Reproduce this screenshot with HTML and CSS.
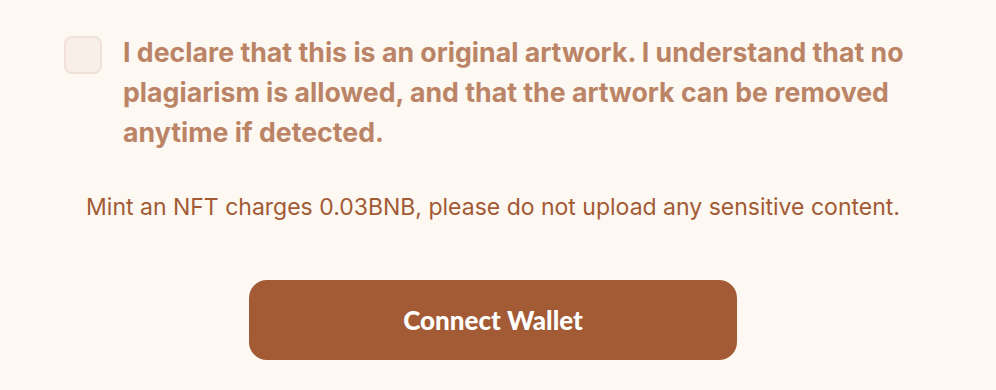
FILE: index.html
```html
<!DOCTYPE html>
<html lang="en">
<head>
    <meta charset="UTF-8">
    <meta name="viewport" content="width=device-width, initial-scale=1.0">
    <title>Mint NFT</title>
    <link rel="stylesheet" href="styles.css">
</head>
<body>
    <div class="mint-form">
        <label class="declare">
            <span class="check-box"></span>
            <span class="declare-text">I declare that this is an original artwork. I understand that no plagiarism is allowed, and that the artwork can be removed anytime if detected.</span>
        </label>

        <p class="notice">Mint an NFT charges 0.03BNB, please do not upload any sensitive content.</p>

        <div class="actions">
            <button class="connect-btn">Connect Wallet</button>
        </div>
    </div>
</body>
</html>
```

FILE: styles.css
```css
:root {
    --bg-color: #fdf8f1;
    --muted-brown: #bb8466;
    --brown: #a25a35;
    --button-color: #a25b34;
}

body {
    margin: 0;
    background-color: var(--bg-color);
    font-family: 'Inter', sans-serif;
}

.mint-form {
    padding: 32px 64px 0;
}

.declare {
    display: flex;
    align-items: flex-start;
    gap: 21px;
}

.check-box {
    flex: none;
    width: 34px;
    height: 34px;
    margin-top: 4px;
    border: 2px solid #f0e2d8;
    border-radius: 8px;
    background: #f8efe8;
}

.declare-text {
    max-width: 795px;
    color: var(--muted-brown);
    font-size: 26.7px;
    font-weight: 700;
    line-height: 40px;
}

.notice {
    margin: 40px 0 0;
    text-align: center;
    color: var(--brown);
    font-size: 23px;
    line-height: 30px;
    padding-right: 10px;
}

.actions {
    display: flex;
    justify-content: center;
    margin-top: 58px;
}

.connect-btn {
    width: 488px;
    height: 80px;
    margin-right: 10px;
    border: none;
    border-radius: 18px;
    background-color: var(--button-color);
    color: #fff;
    font-family: 'Lato', sans-serif;
    font-size: 26px;
    font-weight: 900;
    cursor: pointer;
}
```
